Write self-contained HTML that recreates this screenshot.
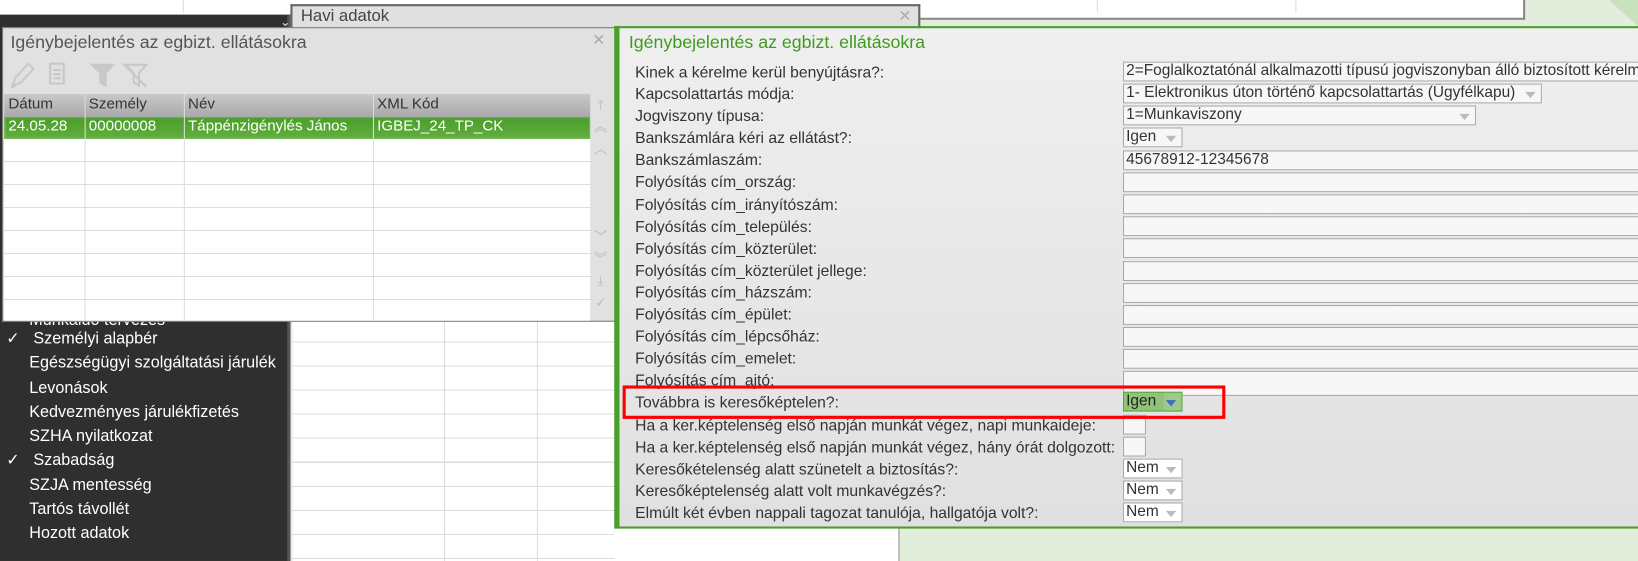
<!DOCTYPE html><html><head><meta charset="utf-8"><style>
*{margin:0;padding:0;box-sizing:border-box}
html,body{width:1638px;height:537px;overflow:hidden;background:#e2eedb}
#w{position:absolute;left:0;top:0;width:1568px;height:514px;transform:scale(1.04464);transform-origin:0 0;font-family:"Liberation Sans",sans-serif;font-size:14px;color:#333}
.a{position:absolute}
span.a{white-space:nowrap}
.f{position:absolute;left:1075px;height:19px;background:#f7f7f7;border:1px solid #aaa;font-size:14.8px;line-height:17px;padding-left:2px;white-space:nowrap;overflow:hidden;color:#333}.f i{position:absolute;right:5px;top:7px;border-left:5px solid transparent;border-right:5px solid transparent;border-top:6px solid #bbb}
</style></head><body><div id="w">
<div class="a" style="left:0;top:0;width:1460px;height:19px;background:#fff;border-bottom:2px solid #888;border-right:2px solid #888"></div>
<div class="a" style="left:175px;top:0;width:1px;height:12px;background:#ddd"></div>
<div class="a" style="left:1050px;top:0;width:1px;height:12px;background:#ddd"></div>
<div class="a" style="left:1240px;top:0;width:1px;height:12px;background:#ddd"></div>
<div class="a" style="left:1540px;top:0;width:0;height:0;border-left:28px solid transparent;border-top:25px solid #c8e2bd"></div>
<div class="a" style="left:0;top:14px;width:278px;height:523px;background:#2f2f2f;border-right:3px solid #555"></div>
<div class="a" style="left:268px;top:14px;color:#ddd;font-size:12px">⌄</div>
<div class="a" style="left:0;top:300px;width:275px;color:#fff;font-size:15.5px;line-height:23.3px;white-space:nowrap">
<div style="padding-left:28px;margin-top:-5px;height:18px;overflow:hidden">Munkaidő tervezés</div>
<div style="padding-left:6px">✓&nbsp;&nbsp;&nbsp;Személyi alapbér</div>
<div style="padding-left:28px">Egészségügyi szolgáltatási járulék</div>
<div style="padding-left:28px">Levonások</div>
<div style="padding-left:28px">Kedvezményes járulékfizetés</div>
<div style="padding-left:28px">SZHA nyilatkozat</div>
<div style="padding-left:6px">✓&nbsp;&nbsp;&nbsp;Szabadság</div>
<div style="padding-left:28px">SZJA mentesség</div>
<div style="padding-left:28px">Tartós távollét</div>
<div style="padding-left:28px">Hozott adatok</div>
</div>
<div class="a" style="left:280px;top:305px;width:310px;height:232px;background:repeating-linear-gradient(#fff 0 22px,#ddd 22px 23px)"></div>
<div class="a" style="left:425px;top:305px;width:1px;height:232px;background:#ddd"></div>
<div class="a" style="left:514px;top:305px;width:1px;height:232px;background:#ddd"></div>
<div class="a" style="left:860px;top:505px;width:778px;height:32px;background:#e2eedb;border-left:1px solid #888"></div>
<div class="a" style="left:588px;top:505px;width:272px;height:32px;background:#fff"></div>
<div class="a" style="left:278px;top:4px;width:603px;height:24px;background:#e0e0e0;border:2px solid #666;border-bottom:none"></div>
<div class="a" style="left:288px;top:7px;font-size:16px;color:#444">Havi adatok</div>
<div class="a" style="left:860px;top:6px;font-size:15px;color:#aaa">✕</div>
<div class="a" style="left:2px;top:26px;width:588px;height:282px;background:#e1e1e1;border:1px solid #777"></div>
<div class="a" style="left:10px;top:31px;font-size:17px;color:#555;white-space:nowrap">Igénybejelentés az egbizt. ellátásokra</div>
<div class="a" style="left:567px;top:29px;font-size:15px;color:#aaa">✕</div>
<svg class="a" style="left:8px;top:58px" width="140" height="28" viewBox="0 0 140 28" fill="none" stroke="#c8c8c8" stroke-width="2">
<path d="M4 24l3-8 12-13 5 5-12 13z M3 26l4-2"/><rect x="40" y="3" width="13" height="19"/><path d="M43 9h7M43 13h7M43 17h7"/>
<path d="M80 4h20l-7 8v12l-5-3v-9z" fill="#c8c8c8"/><path d="M112 4h20l-7 8v12l-5-3v-9z M110 3l22 22" />
</svg>
<div class="a" style="left:4px;top:90px;width:561px;height:22px;background:linear-gradient(#c9c9c9,#a9a9a9)"></div>
<div class="a" style="left:4px;top:112px;width:561px;height:21px;background:linear-gradient(#4a9e2a,#62ae3f);border:1px solid #62b043"></div>
<div class="a" style="left:4px;top:133px;width:561px;height:174px;background:repeating-linear-gradient(#fff 0 21px,#ddd 21px 22px)"></div>
<div class="a" style="left:81px;top:90px;width:1px;height:217px;background:#ddd"></div>
<div class="a" style="left:176px;top:90px;width:1px;height:217px;background:#ddd"></div>
<div class="a" style="left:357px;top:90px;width:1px;height:217px;background:#ddd"></div>
<div class="a" style="left:0;top:92px;font-size:14.5px;color:#333;line-height:17px">
<span class="a" style="left:8px">Dátum</span><span class="a" style="left:85px">Személy</span><span class="a" style="left:180px">Név</span><span class="a" style="left:361px">XML Kód</span></div>
<div class="a" style="left:0;top:113px;font-size:14.5px;color:#fff;line-height:17px">
<span class="a" style="left:8px">24.05.28</span><span class="a" style="left:85px">00000008</span><span class="a" style="left:180px">Táppénzigénylés János</span><span class="a" style="left:361px">IGBEJ_24_TP_CK</span></div>
<div class="a" style="left:566px;top:90px;width:18px;color:#bbb;font-size:13px;line-height:21px;text-align:center">
<div>⤒</div><div>︽</div><div>︿</div><div style="height:63px"></div><div>﹀</div><div>︾</div><div>⤓</div><div>✓</div></div>
<div class="a" style="left:588px;top:25px;width:980px;height:481px;background:linear-gradient(#efefef,#e0e0e0);border-top:2px solid #4a9e2a;border-left:5px solid #4a9e2a;border-bottom:2px solid #4a9e2a"></div>
<div class="a" style="left:602px;top:31px;font-size:17px;color:#3f9a1e;white-space:nowrap">Igénybejelentés az egbizt. ellátásokra</div>
<div class="a" style="left:608px;top:59px;font-size:15px;line-height:21.1px;color:#333;white-space:nowrap">
<div>Kinek a kérelme kerül benyújtásra?:</div><div>Kapcsolattartás módja:</div><div>Jogviszony típusa:</div><div>Bankszámlára kéri az ellátást?:</div><div>Bankszámlaszám:</div><div>Folyósítás cím_ország:</div><div>Folyósítás cím_irányítószám:</div><div>Folyósítás cím_település:</div><div>Folyósítás cím_közterület:</div><div>Folyósítás cím_közterület jellege:</div><div>Folyósítás cím_házszám:</div><div>Folyósítás cím_épület:</div><div>Folyósítás cím_lépcsőház:</div><div>Folyósítás cím_emelet:</div><div>Folyósítás cím_ajtó:</div><div>Továbbra is keresőképtelen?:</div><div>Ha a ker.képtelenség első napján munkát végez, napi munkaideje:</div><div>Ha a ker.képtelenség első napján munkát végez, hány órát dolgozott:</div><div>Keresőkételenség alatt szünetelt a biztosítás?:</div><div>Keresőképtelenség alatt volt munkavégzés?:</div><div>Elmúlt két évben nappali tagozat tanulója, hallgatója volt?:</div>
</div>
<div class="f" style="top:59px;width:493px;border-right:none">2=Foglalkoztatónál alkalmazotti típusú jogviszonyban álló biztosított kérelme</div>
<div class="f" style="top:80px;width:401px">1- Elektronikus úton történő kapcsolattartás (Ügyfélkapu)<i></i></div>
<div class="f" style="top:101px;width:338px">1=Munkaviszony<i></i></div>
<div class="f" style="top:122px;width:57px">Igen<i></i></div>
<div class="f" style="top:144px;width:493px;border-right:none">45678912-12345678</div>
<div class="f" style="top:165px;width:493px;border-right:none"></div>
<div class="f" style="top:186px;width:493px;border-right:none"></div>
<div class="f" style="top:207px;width:493px;border-right:none"></div>
<div class="f" style="top:228px;width:493px;border-right:none"></div>
<div class="f" style="top:250px;width:493px;border-right:none"></div>
<div class="f" style="top:271px;width:493px;border-right:none"></div>
<div class="f" style="top:292px;width:493px;border-right:none"></div>
<div class="f" style="top:313px;width:493px;border-right:none"></div>
<div class="f" style="top:334px;width:493px;border-right:none"></div>
<div class="f" style="top:355px;width:493px;border-right:none;height:24px"></div>
<div class="f" style="top:375px;width:57px;background:#8fc37a;border-color:#5aa83a;color:#222">Igen<span style="position:absolute;left:38px;top:0;width:18px;height:17px;background:#9fc98c"></span><i style="border-top-color:#3a6fc4"></i></div>
<div class="f" style="top:397px;width:22px"></div>
<div class="f" style="top:418px;width:22px"></div>
<div class="f" style="top:439px;width:57px;background:#fff">Nem<i></i></div>
<div class="f" style="top:460px;width:57px;background:#fff">Nem<i></i></div>
<div class="f" style="top:481px;width:57px;background:#fff">Nem<i></i></div>
<div class="a" style="left:596px;top:369px;width:577px;height:32px;border:3px solid #f00"></div>
</div></body></html>
